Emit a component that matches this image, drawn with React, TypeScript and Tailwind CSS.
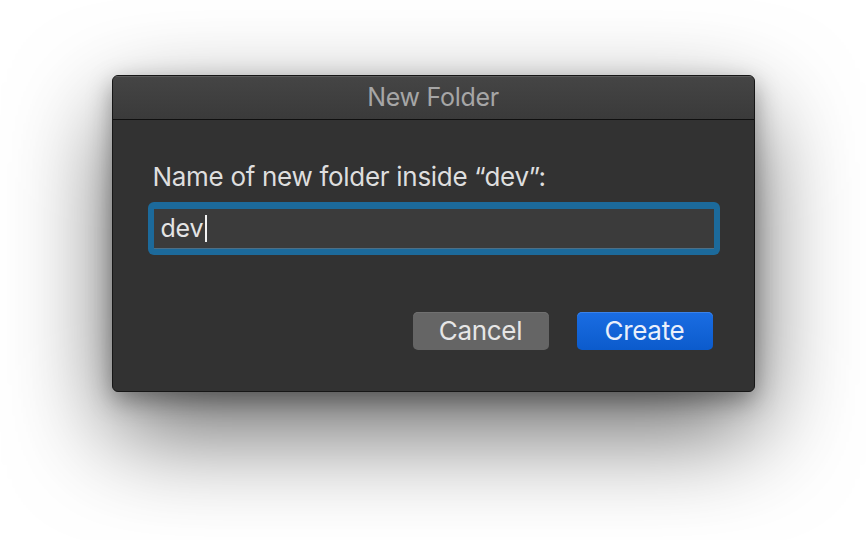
import React from "react";

const font = { fontFamily: "Inter, 'Noto Sans', sans-serif" };

const NewFolderDialog = () => {
  return (
    <div className="w-[643px] h-[317px] rounded-[6px] border border-[#161616] bg-[#323232] shadow-[0_40px_100px_rgba(0,0,0,0.6),0_8px_24px_rgba(0,0,0,0.35)] overflow-hidden flex flex-col">
      {/* title bar */}
      <div className="h-[44px] shrink-0 flex items-center justify-center border-b border-[#0f0f0f] bg-gradient-to-b from-[#454545] to-[#3a3a3a] shadow-[inset_0_1px_0_#5c5c5c]">
        <span className="text-[25px] text-[#a6a6a6] tracking-[-0.3px] pt-[1px]">New Folder</span>
      </div>

      <div className="flex-1 flex flex-col px-[35px]">
        <label className="mt-[42px] ml-[5px] text-[26px] leading-[30px] text-[#dedede] tracking-[-0.3px]">
          Name of new folder inside “dev”:
        </label>

        <div className="mt-[10px] h-[53px] w-[572px] rounded-[6px] bg-[#1c6a9b] p-[6px] pt-[7px]">
          <div className="h-full bg-[#3b3b3b] border-b border-[#4d6f86] flex items-center pl-[7px]">
            <span className="text-[25px] text-[#e4e4e4] tracking-[-0.2px]">dev</span>
            <span className="ml-[2px] w-[2px] h-[27px] bg-[#f2f2f2]" />
          </div>
        </div>

        <div className="mt-[57px] flex justify-end gap-[28px] pr-[6px]">
          <button className="w-[136px] h-[38px] rounded-[5px] bg-[#656565] shadow-[inset_0_1px_0_#707070] text-[26px] leading-[38px] text-[#e6e6e6] tracking-[-0.3px]">
            Cancel
          </button>
          <button className="w-[136px] h-[38px] rounded-[5px] bg-gradient-to-b from-[#1a6de3] to-[#0b5bcc] shadow-[inset_0_1px_0_#3a82ea] text-[26px] leading-[38px] text-[#eaf0fb] tracking-[-0.3px]">
            Create
          </button>
        </div>
      </div>
    </div>
  );
};

export default function App() {
  return (
    <div className="w-full h-[540px] bg-white flex justify-center pt-[75px] overflow-hidden" style={font}>
      <NewFolderDialog />
    </div>
  );
}
